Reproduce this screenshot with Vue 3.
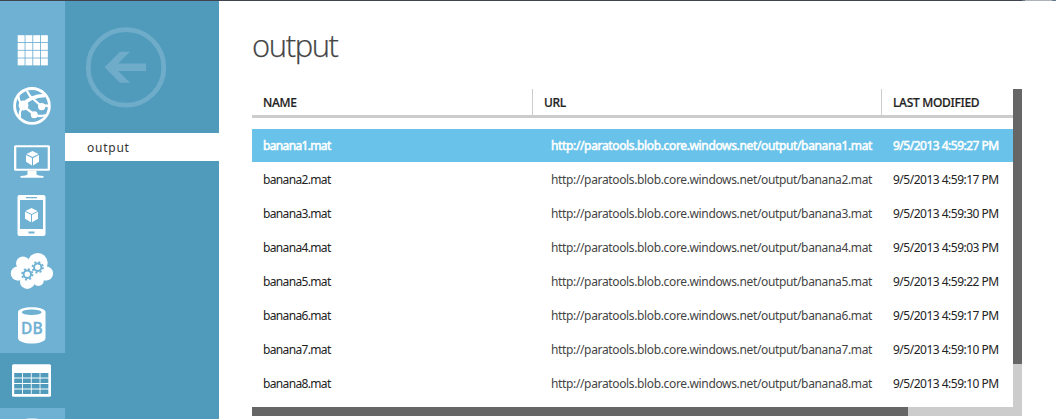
<script setup>
const rows = ['27', '17', '30', '03', '22', '17', '10', '10'].map((s, i) => ({
  name: `banana${i + 1}.mat`,
  url: `http://paratools.blob.core.windows.net/output/banana${i + 1}.mat`,
  modified: `9/5/2013 4:59:${s} PM`,
}))
const cells = [0, 1, 2, 3]
</script>

<template>
  <div class="page">
    <nav class="rail">
      <a class="slot">
        <svg width="65" height="55" viewBox="0 -1 65 55" fill="#fff">
          <template v-for="r in cells" :key="r">
            <rect v-for="c in cells" :key="c" :x="17.700 + c * 7.750" :y="11.200 + r * 7.750" width="6.900" height="6.900" />
          </template>
        </svg>
      </a>
      <a class="slot">
        <svg width="65" height="55" viewBox="0 -1 65 55" fill="none" stroke="#fff">
          <circle cx="32" cy="26.900" r="17.400" stroke-width="2.800" />
          <path d="M27 12L30 17L41.700 27.500M23 27L34.300 35.500M34 36Q40 38 46 36M18.500 15Q17.500 21 23 27Q19 32 20 38M42 28Q47 25 48.500 28" stroke-width="2.300" />
          <path d="M23 26Q30 17 45 16.500" stroke-width="3.400" />
          <g fill="#fff" stroke="none"><circle cx="23.500" cy="26.500" r="4.900" /><circle cx="41.700" cy="27.600" r="3.700" /><circle cx="34.300" cy="35.700" r="3.500" /></g>
        </svg>
      </a>
      <a class="slot">
        <svg width="65" height="55" viewBox="0 -.7 65 55" fill="#fff">
          <path fill-rule="evenodd" d="M15.500 11.500h33q1.500 0 1.500 1.500v22.500q0 1.500-1.500 1.500h-33q-1.500 0-1.500-1.500v-22.500q0-1.500 1.500-1.500zM16.300 13.500v21.500h31.400v-21.500z" />
          <path d="M27.500 37h9v3.500q1 1.500 7 1.800v1.700h-23v-1.700q6-.3 7-1.800z" />
          <path d="M32.500 17.300l6 2.900-6 3.100-6-3.100zM26 21.200l6 3v7.500l-6-3.600zM39 21.200l-6 3v7.500l6-3.600z" />
        </svg>
      </a>
      <a class="slot">
        <svg width="65" height="55" viewBox="0 -1 65 55" fill="#fff">
          <path fill-rule="evenodd" d="M19.500 6h24q2 0 2 2v37q0 2-2 2h-24q-2 0-2-2v-37q0-2 2-2zM20 11v29h23v-29zM26 8v1.300h11v-1.300zM28.500 42.500v2h6v-2z" />
          <path d="M31.500 19l6 2.900-6 3.100-6-3.100zM25 22.800l6 3v7.500l-6-3.600zM38 22.800l-6 3v7.500l6-3.600z" />
        </svg>
      </a>
      <a class="slot">
        <svg width="65" height="55" viewBox="0 0 65 55">
          <g fill="#fff">
            <circle cx="17.700" cy="30.500" r="6.900" /><circle cx="23" cy="20.500" r="6.900" />
            <circle cx="37.700" cy="20" r="10" /><circle cx="46.200" cy="30.500" r="6.900" />
            <circle cx="27.300" cy="38.700" r="7.300" /><circle cx="38.300" cy="37.400" r="5.500" />
            <rect x="17" y="20" width="29" height="17.300" />
          </g>
          <g fill="none" stroke="#6fb1d3">
            <circle cx="27.300" cy="31.300" r="3.700" stroke-width="2" />
            <circle cx="27.300" cy="31.300" r="5.300" stroke-width="1.700" stroke-dasharray="2.080" />
            <circle cx="37.700" cy="24.300" r="3.700" stroke-width="2" />
            <circle cx="37.700" cy="24.300" r="5.300" stroke-width="1.700" stroke-dasharray="2.080" />
          </g>
        </svg>
      </a>
      <a class="slot">
        <svg width="65" height="55" viewBox="0 0 65 55">
          <path fill="#fff" d="M18 14C18 7.500 45.500 7.500 45.500 14v26C45.500 47.300 18 47.300 18 40z" />
          <ellipse cx="31.700" cy="14.200" rx="10" ry="2.800" fill="#6fb1d3" />
          <text class="db" x="31.900" y="36.200" text-anchor="middle">DB</text>
        </svg>
      </a>
      <a class="slot active">
        <svg width="65" height="55" viewBox="0 0 65 55">
          <rect x="12" y="11.300" width="39" height="32.500" rx="1.500" fill="#fff" />
          <template v-for="r in cells" :key="r">
            <rect v-for="c in cells" :key="c" :x="14.200 + c * 8.750" :y="20 + r * 5.500" width="7.900" height="4.500" fill="#509bbc" />
          </template>
        </svg>
      </a>
      <a class="slot">
        <svg width="65" height="55" viewBox="0 0 65 55"><ellipse cx="32" cy="13.500" rx="10" ry="3.500" fill="#b5d7e8" /></svg>
      </a>
    </nav>
    <aside class="side">
      <div class="back">
        <svg width="82" height="82" viewBox="0 0 82 82">
          <circle cx="41" cy="41.400" r="37.800" fill="none" stroke="#6eacca" stroke-width="4.800" />
          <path fill="#6eacca" d="M19.500 41.300L35 25.800H45L33 37.600H61V45H33L45 56.800H35z" />
        </svg>
      </div>
      <a class="entry">output</a>
    </aside>
    <main class="main">
      <h1>output</h1>
      <div class="frame">
        <div class="table">
          <div class="row head"><span>NAME</span><span>URL</span><span>LAST MODIFIED</span></div>
          <div class="body">
            <div v-for="(r, i) in rows" :key="i" class="row item" :class="{ selected: i === 0 }">
              <span class="name">{{ r.name }}</span><span class="url">{{ r.url }}</span><span class="date">{{ r.modified }}</span>
            </div>
          </div>
        </div>
        <div class="vbar"><i></i></div>
        <div class="hbar"><i></i></div>
      </div>
    </main>
  </div>
</template>

<style>
body { margin: 0; background: #fff; }
</style>
<style scoped>
.page { box-sizing: border-box; width: 1056px; height: 419px; padding-top: 1px; overflow: hidden; display: flex; font-family: "Noto Sans", "Open Sans", sans-serif; font-size: 12px; color: #222; background: linear-gradient(90deg, #40444f 1022px, #66788c 1022px 1025px, #adb1ba 1025px 1052px, #66788c 1052px) 0 0 / 100% 1px no-repeat #fff; }
.rail { width: 65px; flex: none; padding-top: 22px; background: #6fb1d3; }
.slot { display: block; height: 55px; }
.slot svg { display: block; }
.active { background: #509bbc; }
.db { font: 600 15.500px "Open Sans", sans-serif; fill: #6fb1d3; stroke: #6fb1d3; stroke-width: .3px; }
.side { width: 154px; flex: none; background: #509bbc; }
.back { height: 107px; padding: 25px 0 0 20px; }
.entry { display: block; height: 28px; line-height: 29px; padding-left: 22px; background: #fff; color: #333; font-size: 12px; letter-spacing: .75px; }
.main { padding-left: 33px; flex: 1; }
h1 { margin: 0; height: 88px; font: 300 31px/89px "Open Sans", sans-serif; letter-spacing: -1.400px; color: #444; -webkit-text-stroke: .25px #444; }
.frame { display: grid; grid-template: 318px 9px / 761px 9px; }
.row { display: grid; grid-template-columns: 281px 349px 131px; }
.head { height: 26px; border-bottom: 3px solid #ccc; font-weight: 500; line-height: 28px; letter-spacing: -.3px; -webkit-text-stroke: .2px #222; }
.head span { padding-left: 11px; border-right: 1px solid #ccc; }
.head span:last-child { border: 0; }
.body { padding-top: 11px; }
.item { height: 33px; line-height: 34px; margin-bottom: 1px; white-space: nowrap; }
.item span { height: 33px; padding-left: 11px; letter-spacing: -.5px; }
.item .name { letter-spacing: -.65px; }
.item .url { padding-left: 18px; line-height: 33px; letter-spacing: -.355px; color: #444; }
.selected { background: #69c2e9; color: #fff; -webkit-text-stroke: .5px #fff; }
.selected .url { color: #fff; }
.vbar { background: #ccc; }
.vbar i { display: block; height: 275px; background: #666; }
.hbar { grid-column: 1 / 3; background: #ccc; }
.hbar i { display: block; width: 656px; height: 9px; background: #666; }
</style>
